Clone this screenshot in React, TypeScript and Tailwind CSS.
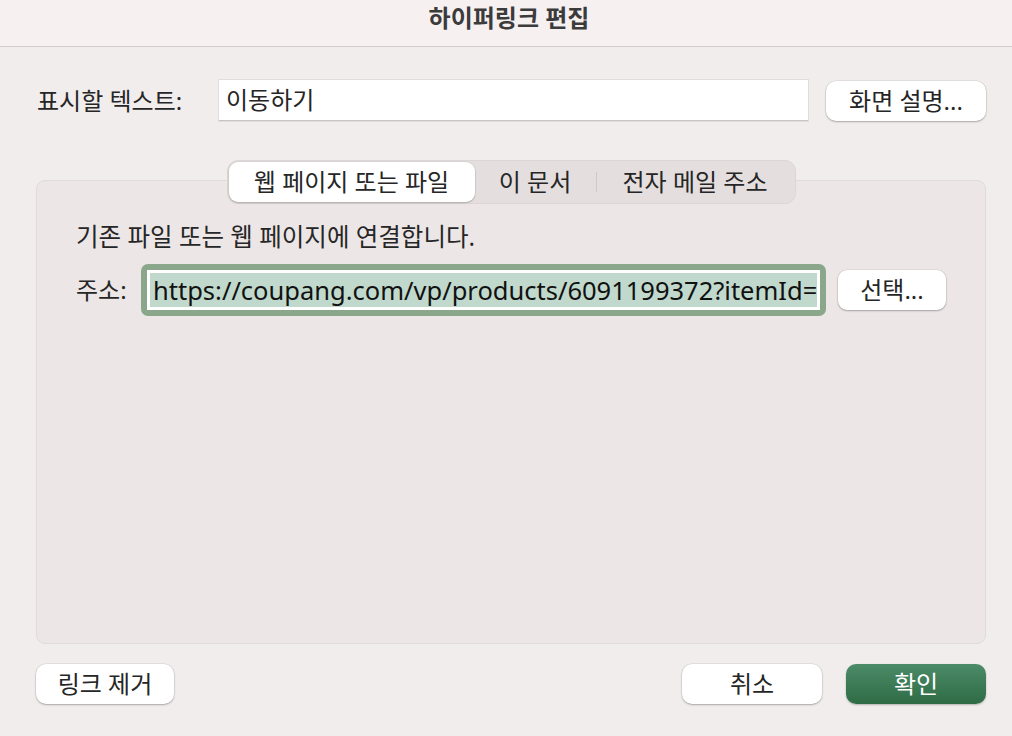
import React from "react";

const font = { fontFamily: '"Noto Sans", "Noto Sans CJK KR", sans-serif' };

const btnShadow =
  "shadow-[0_1px_2px_rgba(0,0,0,0.25),0_0_0_0.5px_rgba(0,0,0,0.1)]";

export default function App() {
  return (
    <div
      className="w-[1012px] h-[736px] bg-[#f2eded] flex flex-col text-[#262626] overflow-hidden"
      style={font}
    >
      {/* Title bar */}
      <div className="h-[47px] shrink-0 bg-[#f7f0f0] border-b border-[#d3cdcd] flex justify-center pl-[6px] pt-[1px]">
        <span className="text-[24px] font-bold text-[#3b3b3b] leading-[34px]">하이퍼링크 편집</span>
      </div>

      {/* Display text row */}
      <div className="flex items-center mt-[33px] pl-[37px] pr-[26px] h-[41px]">
        <span className="w-[182px] text-[24px] leading-none">표시할 텍스트:</span>
        <div className="w-[589px] h-[41px] bg-white border-b border-[#c9c4c4] shadow-[0_0_0_1px_#e2dddd] flex items-center pl-[7px] text-[24px]">
          이동하기
        </div>
        <button className={`ml-[18px] w-[160px] h-[40px] bg-white rounded-[10px] ${btnShadow} text-[24px] flex items-center justify-center`}>
          화면 설명...
        </button>
      </div>

      {/* Tabs + panel */}
      <div className="mt-[39px] pl-[36px] pr-[26px] flex flex-col">
        <div className="flex justify-center relative z-10 -mb-[24px]">
          <div className="h-[44px] bg-[#e4dede] border border-[#dcd6d6] rounded-[11px] flex items-center px-[1px]">
            <div className="w-[246px] h-[40px] bg-white rounded-[9px] shadow-[0_1px_2px_rgba(0,0,0,0.2),0_0_0_0.5px_rgba(0,0,0,0.08)] flex items-center justify-center text-[24px]">
              웹 페이지 또는 파일
            </div>
            <div className="w-[121px] h-[40px] flex items-center justify-center text-[24px]">이 문서</div>
            <div className="w-[1px] h-[20px] bg-[#cfc9c9]" />
            <div className="w-[197px] h-[40px] flex items-center justify-center text-[24px]">전자 메일 주소</div>
          </div>
        </div>
        <div className="h-[464px] bg-[#ece6e6] border border-[#e0dada] rounded-[9px] pt-[40px] pl-[39px]">
          <div className="text-[24.5px] leading-[32px]">기존 파일 또는 웹 페이지에 연결합니다.</div>
          <div className="flex items-center mt-[11px]">
            <span className="w-[65px] text-[24px]">주소:</span>
            <div className="w-[685px] h-[52px] rounded-[7px] bg-[#8ba78b] p-[6px]">
              <div className="w-full h-full bg-white p-[3px]">
                <div className="w-full h-full bg-[#c0d9cc] flex items-center pl-[3px] text-[25.5px] text-[#111] whitespace-nowrap overflow-hidden">
                  https://coupang.com/vp/products/6091199372?itemId=
                </div>
              </div>
            </div>
            <button className={`ml-[12px] w-[108px] h-[40px] bg-white rounded-[9px] ${btnShadow} text-[24px] flex items-center justify-center`}>
              선택...
            </button>
          </div>
        </div>
      </div>

      {/* Bottom buttons */}
      <div className="flex items-center mt-[20px] pl-[36px] pr-[26px]">
        <button className={`w-[138px] h-[40px] bg-white rounded-[10px] ${btnShadow} text-[24px] flex items-center justify-center`}>
          링크 제거
        </button>
        <div className="flex-1" />
        <button className={`w-[140px] h-[40px] bg-white rounded-[10px] ${btnShadow} text-[24px] flex items-center justify-center`}>
          취소
        </button>
        <button className="ml-[24px] w-[140px] h-[40px] rounded-[10px] bg-gradient-to-b from-[#4b8b67] to-[#2f6c46] shadow-[0_1px_2px_rgba(0,0,0,0.25)] text-white text-[24px] flex items-center justify-center">
          확인
        </button>
      </div>
    </div>
  );
}
